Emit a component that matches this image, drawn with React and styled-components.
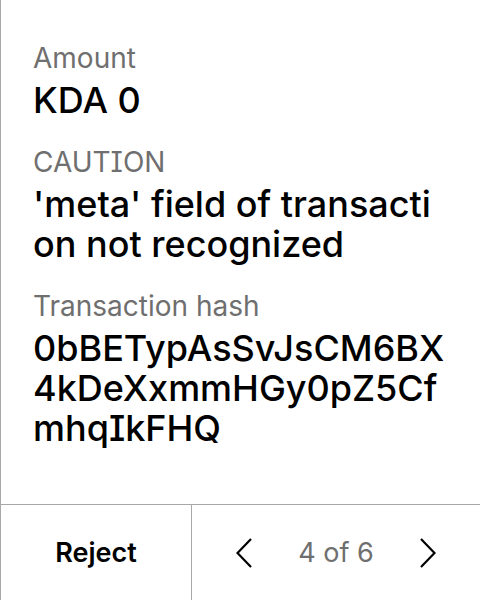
import React from "react";
import styled, { createGlobalStyle } from "styled-components";

const GlobalStyle = createGlobalStyle`
  html, body {
    margin: 0;
    padding: 0;
    background: #ffffff;
  }
  body {
    font-family: Inter, "Noto Sans", sans-serif;
    font-feature-settings: "cv08" 1;
    color: #000000;
  }
`;

const fields = [
  { label: "Amount", value: "KDA 0" },
  { label: "CAUTION", value: "'meta' field of transaction not recognized" },
  { label: "Transaction hash", value: "0bBETypAsSvJsCM6BX4kDeXxmmHGy0pZ5CfmhqIkFHQ" },
];

function App() {
  return (
    <Screen>
      <GlobalStyle />
      <Content>
        {fields.map((f) => (
          <Field key={f.label}>
            <Label>{f.label}</Label>
            <Value>{f.value}</Value>
          </Field>
        ))}
      </Content>
      <Footer>
        <RejectButton>Reject</RejectButton>
        <Pager>
          <Chevron dir="left" />
          <PageText>4 of 6</PageText>
          <Chevron dir="right" />
        </Pager>
      </Footer>
    </Screen>
  );
}

function Chevron({ dir }) {
  const points = dir === "left" ? "15,1 1.5,15 15,29" : "1,1 14.5,15 1,29";
  return (
    <ChevronSvg viewBox="0 0 16 30" width="16" height="30">
      <polyline points={points} fill="none" stroke="#000" strokeWidth="2.2" />
    </ChevronSvg>
  );
}

const Screen = styled.div`
  width: 480px;
  height: 600px;
  box-sizing: border-box;
  border-left: 1px solid #a8a8a8;
  display: flex;
  flex-direction: column;
  overflow: hidden;
`;

const Content = styled.div`
  flex: 1;
  padding: 40px 31px 0 32px;
  display: flex;
  flex-direction: column;
  gap: 24px;
`;

const Field = styled.div`
  display: flex;
  flex-direction: column;
`;

const Label = styled.div`
  font-size: 28px;
  line-height: 36px;
  color: #6f6f6f;
`;

const Value = styled.div`
  margin-top: 4px;
  font-size: 36px;
  line-height: 40px;
  font-weight: 500;
  word-break: break-all;
`;

const Footer = styled.div`
  height: 95px;
  border-top: 1px solid #a8a8a8;
  display: grid;
  grid-template-columns: 191px 1fr;
`;

const RejectButton = styled.div`
  border-right: 1px solid #a8a8a8;
  display: flex;
  align-items: center;
  justify-content: center;
  font-size: 27px;
  font-weight: 600;
`;

const Pager = styled.div`
  display: flex;
  align-items: center;
  justify-content: center;
  gap: 46px;
`;

const PageText = styled.span`
  font-size: 27px;
  color: #6f6f6f;
`;

const ChevronSvg = styled.svg`
  display: block;
`;

export default App;
